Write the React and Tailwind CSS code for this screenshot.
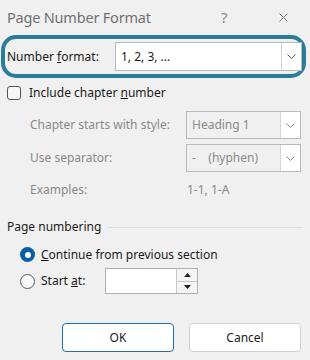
import React from 'react';

const font = { fontFamily: '"Noto Sans", "Open Sans", sans-serif' };

function Chevron({ color = '#5f5f5f' }) {
  return (
    <svg width="9" height="5" viewBox="0 0 9 5" fill="none">
      <path d="M0.5 0.5 L4.5 4.5 L8.5 0.5" stroke={color} strokeWidth="1" />
    </svg>
  );
}

function Select({ value, disabled, className, textClass }) {
  return (
    <div
      className={
        'flex items-stretch border border-[#b9b9b9] ' +
        (disabled ? 'bg-[#f0f0f0] ' : 'bg-white ') +
        className
      }
    >
      <div className={'flex-1 flex items-center pl-[5px] ' + textClass}>{value}</div>
      <div className="w-[20px] bg-white border-l border-[#d4d4d4] flex items-center justify-center">
        <Chevron color={disabled ? '#8a8a8a' : '#555'} />
      </div>
    </div>
  );
}

function Radio({ checked }) {
  if (checked) {
    return (
      <div className="w-[15px] h-[15px] rounded-full bg-[#0a5ea8] flex items-center justify-center">
        <div className="w-[6px] h-[6px] rounded-full bg-white" />
      </div>
    );
  }
  return <div className="w-[15px] h-[15px] rounded-full border border-[#5a5a5a] bg-[#f7f7f7]" />;
}

export default function App() {
  return (
    <div className="w-[310px] h-[360px] bg-[#f0f0f0] overflow-hidden text-[12px] text-[#1b1b1b] leading-none" style={font}>
      {/* title bar */}
      <div className="h-[34px] flex items-center pl-[7px]">
        <span className="w-[214px] text-[14.5px] text-[#707070] tracking-[-0.2px]">Page Number Format</span>
        <span className="w-[58px] text-[15px] text-[#8a8a8a]">?</span>
        <svg width="9" height="9" viewBox="0 0 9 9">
          <path d="M0.5 0.5 L8.5 8.5 M8.5 0.5 L0.5 8.5" stroke="#7a7a7a" strokeWidth="1" />
        </svg>
      </div>

      {/* highlighted number format row */}
      <div className="ml-[1px] mt-[1px] w-[305px] h-[43px] border-[4px] border-[#2b7b9b] rounded-[15px] flex items-center pl-[2px]">
        <span className="w-[108px]">
          Number <span className="underline">f</span>ormat:
        </span>
        <Select value="1, 2, 3, ..." className="w-[187px] h-[29px]" textClass="text-[#1b1b1b]" />
      </div>

      {/* include chapter number */}
      <div className="mt-[8px] pl-[7px] flex items-center gap-[8px]">
        <div className="w-[14px] h-[14px] rounded-[3px] border border-[#555] bg-[#f7f7f7]" />
        <span>
          Include chapter <span className="underline">n</span>umber
        </span>
      </div>

      <div className="mt-[11px] pl-[30px] pr-[9px] flex flex-col gap-[5px] text-[#8a8a8a]">
        <div className="flex items-center">
          <span className="w-[156px]">Chapter starts with style:</span>
          <Select value="Heading 1" disabled className="w-[115px] h-[28px]" textClass="text-[#8a8a8a]" />
        </div>
        <div className="flex items-center">
          <span className="w-[156px]">Use separator:</span>
          <Select
            value={<span className="whitespace-pre">{'-    (hyphen)'}</span>}
            disabled
            className="w-[115px] h-[28px]"
            textClass="text-[#8a8a8a]"
          />
        </div>
        <div className="flex items-center mt-[7px]">
          <span className="w-[157px]">Examples:</span>
          <span>1-1, 1-A</span>
        </div>
      </div>

      {/* page numbering */}
      <div className="mt-[25px] pl-[7px] pr-[7px] flex items-center gap-[7px]">
        <span>Page numbering</span>
        <div className="flex-1 h-px bg-[#dcdcdc]" />
      </div>

      <div className="mt-[14px] pl-[20px] flex flex-col gap-[6px]">
        <div className="flex items-center gap-[6px]">
          <Radio checked />
          <span>
            <span className="underline">C</span>ontinue from previous section
          </span>
        </div>
        <div className="flex items-center gap-[6px]">
          <Radio />
          <span className="w-[58px]">
            Start <span className="underline">a</span>t:
          </span>
          <div className="w-[93px] h-[26px] bg-white border border-[#b0b0b0] flex justify-end">
            <div className="w-[21px] flex flex-col border-l border-[#c8c8c8]">
              <div className="flex-1 flex items-center justify-center border-b border-[#c8c8c8] bg-[#f5f5f5]">
                <svg width="7" height="4" viewBox="0 0 7 4"><path d="M0 4 L3.5 0 L7 4 Z" fill="#222" /></svg>
              </div>
              <div className="flex-1 flex items-center justify-center bg-[#f5f5f5]">
                <svg width="7" height="4" viewBox="0 0 7 4"><path d="M0 0 L3.5 4 L7 0 Z" fill="#222" /></svg>
              </div>
            </div>
          </div>
        </div>
      </div>

      {/* buttons */}
      <div className="mt-[29px] pl-[62px] flex gap-[15px]">
        <button className="w-[112px] h-[29px] bg-white border border-[#1f6fb0] rounded-[4px] text-[12px] text-[#1b1b1b]">
          OK
        </button>
        <button className="w-[112px] h-[29px] bg-white border border-[#d0d0d0] rounded-[4px] text-[12px] text-[#1b1b1b]">
          Cancel
        </button>
      </div>
    </div>
  );
}
